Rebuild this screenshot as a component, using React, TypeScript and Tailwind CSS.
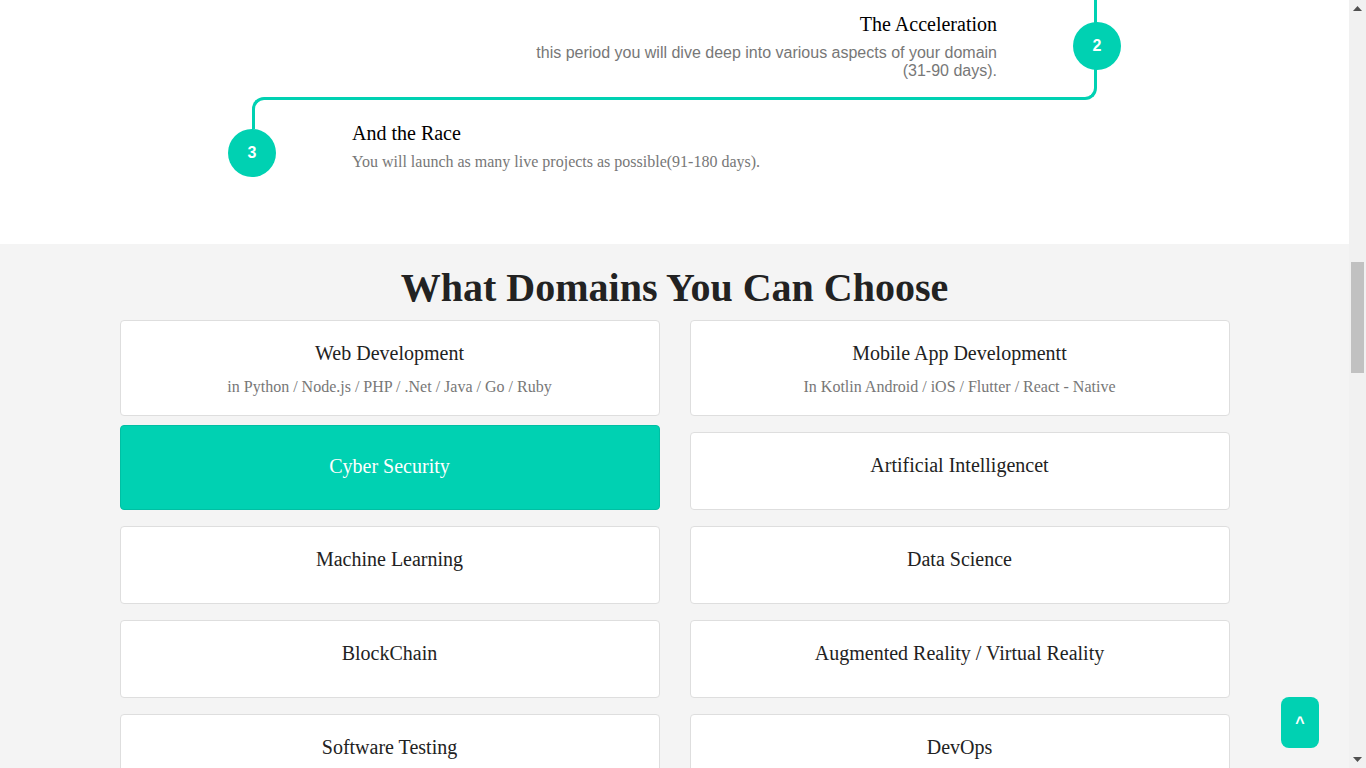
import React from 'react';

const serif = { fontFamily: '"Liberation Serif", "Times New Roman", serif' };
const sans = { fontFamily: '"Liberation Sans", Arial, sans-serif' };

interface Domain {
  title: string;
  sub?: string;
  active?: boolean;
}

const domains: Domain[] = [
  { title: 'Web Development', sub: 'in Python / Node.js / PHP / .Net / Java / Go / Ruby' },
  { title: 'Mobile App Developmentt', sub: 'In Kotlin Android / iOS / Flutter / React - Native' },
  { title: 'Cyber Security', active: true },
  { title: 'Artificial Intelligencet' },
  { title: 'Machine Learning' },
  { title: 'Data Science' },
  { title: 'BlockChain' },
  { title: 'Augmented Reality / Virtual Reality' },
  { title: 'Software Testing' },
  { title: 'DevOps' },
];

const DomainCard: React.FC<{ domain: Domain }> = ({ domain }) => {
  const { title, sub, active } = domain;

  if (active) {
    return (
      <div className="-mt-[7px] h-[85px] rounded-[4px] border border-[#00bfa3] bg-[#00d1b2] pt-[28px] text-center">
        <h3 className="text-[20px] leading-[24px] text-white" style={serif}>{title}</h3>
      </div>
    );
  }

  return (
    <div className={`rounded-[4px] border border-[#dedede] bg-white pt-[20px] text-center ${sub ? 'h-[96px]' : 'h-[78px]'}`}>
      <h3 className="text-[20px] leading-[24px] text-[#222]" style={serif}>{title}</h3>
      {sub && (
        <p className="mt-[12px] text-[16px] leading-[20px] text-[#777]" style={serif}>{sub}</p>
      )}
    </div>
  );
};

const Scrollbar: React.FC = () => (
  <div className="flex h-full w-[17px] shrink-0 flex-col bg-[#f1f1f1]">
    <div className="flex h-[17px] items-center justify-center">
      <svg width="9" height="5" viewBox="0 0 9 5"><path d="M0 5 L4.5 0 L9 5 Z" fill="#505050" /></svg>
    </div>
    <div className="mt-[245px] ml-[2px] h-[111px] w-[13px] bg-[#c1c1c1]" />
    <div className="flex-1" />
    <div className="flex h-[17px] items-center justify-center">
      <svg width="9" height="5" viewBox="0 0 9 5"><path d="M0 0 L4.5 5 L9 0 Z" fill="#505050" /></svg>
    </div>
  </div>
);

export default function App() {
  return (
    <div className="flex h-[768px] w-full overflow-hidden">
      <div className="relative flex-1 overflow-hidden">
        {/* timeline tail */}
        <section className="h-[244px] bg-white">
          <div className="mx-auto w-[893px]">
            <div className="relative ml-[36px] mr-[24px] h-[100px] rounded-br-[12px] border-b-[3px] border-r-[3px] border-[#00d1b2] pr-[97px] pt-[13px] text-right">
              <h4 className="text-[20px] leading-[22px] text-black" style={serif}>The Acceleration</h4>
              <p className="ml-auto mt-[9px] max-w-[470px] text-[16px] leading-[18px] text-[#777]" style={sans}>
                this period you will dive deep into various aspects of your domain (31-90 days).
              </p>
              <div className="absolute -right-[27px] top-[22px] flex h-[48px] w-[48px] items-center justify-center rounded-full bg-[#00d1b2] text-[16px] font-bold text-white" style={sans}>
                2
              </div>
            </div>
            <div className="flex">
              <div className="flex w-[48px] flex-col">
                <div className="-mt-[3px] ml-[24px] h-[32px] w-[24px] rounded-tl-[12px] border-l-[3px] border-t-[3px] border-[#00d1b2]" />
                <div className="flex h-[48px] w-[48px] items-center justify-center rounded-full bg-[#00d1b2] text-[16px] font-bold text-white" style={sans}>
                  3
                </div>
              </div>
              <div className="ml-[76px] pt-[22px]">
                <h4 className="text-[20px] leading-[22px] text-black" style={serif}>And the Race</h4>
                <p className="mt-[8px] text-[16px] leading-[20px] text-[#777]" style={serif}>
                  You will launch as many live projects as possible(91-180 days).
                </p>
              </div>
            </div>
          </div>
        </section>

        {/* domains */}
        <section className="h-[524px] bg-[#f4f4f4] pt-[20px]">
          <h2 className="text-center text-[40px] font-bold leading-[48px] text-[#222]" style={serif}>
            What Domains You Can Choose
          </h2>
          <div className="mx-auto mt-[8px] grid w-[1110px] grid-cols-2 items-start gap-x-[30px] gap-y-[16px]">
            {domains.map((d) => (
              <DomainCard key={d.title} domain={d} />
            ))}
          </div>
        </section>

        <button className="fixed bottom-[20px] right-[47px] flex h-[51px] w-[38px] items-center justify-center rounded-[8px] bg-[#00d1b2] text-[16px] font-bold text-white" style={sans}>
          ^
        </button>
      </div>
      <Scrollbar />
    </div>
  );
}
